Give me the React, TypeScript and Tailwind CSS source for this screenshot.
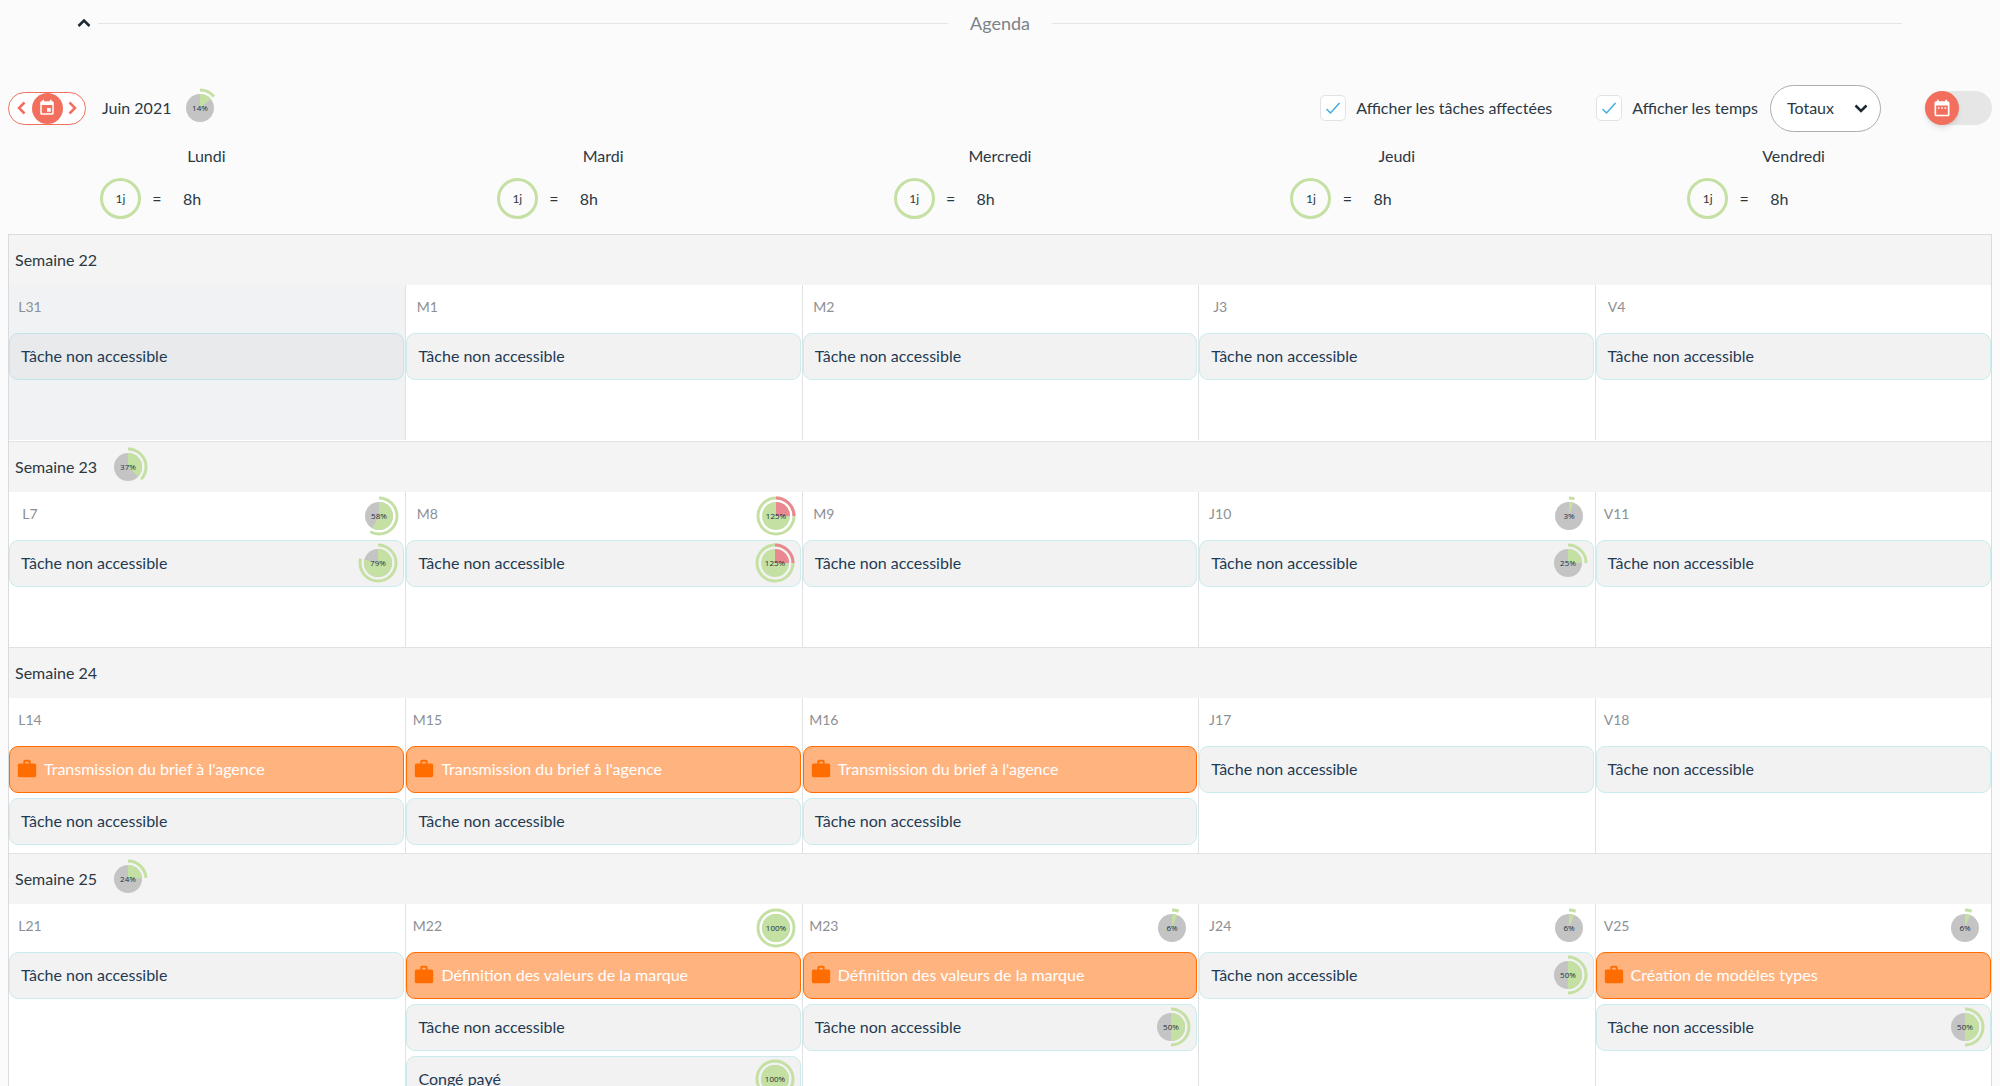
import { MdDateRange, MdEvent, MdWork } from "react-icons/md";

type Task = {
  label: string;
  project?: boolean;
  load?: number;
};

type Day = {
  code: string;
  load?: number;
  outside?: boolean;
  tasks: Task[];
};

type Week = {
  label: string;
  load?: number;
  days: Day[];
};

const WEEKDAYS = ["Lundi", "Mardi", "Mercredi", "Jeudi", "Vendredi"];

const CHEVRONS = {
  up: "M6.5 15 12 9.5 17.5 15",
  down: "M6.5 9.5 12 15 17.5 9.5",
  left: "M14.5 6.5 9 12 14.5 17.5",
  right: "M9.5 6.5 15 12 9.5 17.5",
};

const locked = (load?: number): Task => ({ label: "Tâche non accessible", load });
const project = (label: string): Task => ({ label, project: true });

const WEEKS: Week[] = [
  {
    label: "Semaine 22",
    days: [
      { code: "L31", outside: true, tasks: [locked()] },
      { code: "M1", tasks: [locked()] },
      { code: "M2", tasks: [locked()] },
      { code: "J3", tasks: [locked()] },
      { code: "V4", tasks: [locked()] },
    ],
  },
  {
    label: "Semaine 23",
    load: 37,
    days: [
      { code: "L7", load: 58, tasks: [locked(79)] },
      { code: "M8", load: 125, tasks: [locked(125)] },
      { code: "M9", tasks: [locked()] },
      { code: "J10", load: 3, tasks: [locked(25)] },
      { code: "V11", tasks: [locked()] },
    ],
  },
  {
    label: "Semaine 24",
    days: [
      { code: "L14", tasks: [project("Transmission du brief à l'agence"), locked()] },
      { code: "M15", tasks: [project("Transmission du brief à l'agence"), locked()] },
      { code: "M16", tasks: [project("Transmission du brief à l'agence"), locked()] },
      { code: "J17", tasks: [locked()] },
      { code: "V18", tasks: [locked()] },
    ],
  },
  {
    label: "Semaine 25",
    load: 24,
    days: [
      { code: "L21", tasks: [locked()] },
      { code: "M22", load: 100, tasks: [project("Définition des valeurs de la marque"), locked(), { label: "Congé payé", load: 100 }] },
      { code: "M23", load: 6, tasks: [project("Définition des valeurs de la marque"), locked(50)] },
      { code: "J24", load: 6, tasks: [locked(50)] },
      { code: "V25", load: 6, tasks: [project("Création de modèles types"), locked(50)] },
    ],
  },
];

export default function App() {
  return (
    <main className="h-screen overflow-hidden bg-[#fbfbfb] px-2 font-[Lato,'Open_Sans',sans-serif] text-base text-[#2b3844]">
      <AgendaHeading />
      <Toolbar />
      <WeekdayHeader />
      <div className="border border-[#d9dcdf] bg-white">
        {WEEKS.map((week) => (
          <WeekRow key={week.label} week={week} />
        ))}
      </div>
    </main>
  );
}

function Chevron({ direction, className = "" }: { direction: keyof typeof CHEVRONS; className?: string }) {
  return (
    <svg viewBox="0 0 24 24" aria-hidden="true" className={`size-6 fill-none stroke-current stroke-[2.5] ${className}`}>
      <path d={CHEVRONS[direction]} />
    </svg>
  );
}

function AgendaHeading() {
  return (
    <header className="flex h-[46px] items-center pr-[90px] pl-16">
      <button type="button" aria-label="Replier l'agenda" className="mr-0.5 text-[#1c2833]">
        <Chevron direction="up" />
      </button>
      <span className="h-px flex-1 bg-[#e3e5e6]" />
      <h1 className="px-[22px] text-lg text-[#7b8288]">Agenda</h1>
      <span className="h-px flex-1 bg-[#e3e5e6]" />
    </header>
  );
}

function Toolbar() {
  return (
    <div className="mt-[38px] flex h-12 items-center">
      <div className="flex h-[33px] w-[78px] items-center justify-between rounded-full border border-[#f26f5e] bg-white px-px text-[#f26f5e]">
        <button type="button" aria-label="Mois précédent">
          <Chevron direction="left" />
        </button>
        <button type="button" aria-label="Aujourd'hui" className="-mx-1 flex size-[31px] shrink-0 items-center justify-center rounded-full bg-[#f26f5e] text-white">
          <MdEvent className="size-[18px]" />
        </button>
        <button type="button" aria-label="Mois suivant">
          <Chevron direction="right" />
        </button>
      </div>
      <span className="ml-4 w-[78px]">Juin 2021</span>
      <LoadBadge value={14} />
      <div className="ml-auto flex items-center">
        <Checkbox label="Afficher les tâches affectées" />
        <span className="w-11" />
        <Checkbox label="Afficher les temps" />
        <TotalsSelect />
        <ViewSwitch />
      </div>
    </div>
  );
}

function Checkbox({ label }: { label: string }) {
  return (
    <label className="flex items-center gap-[10px]">
      <span className="grid size-[26px] place-items-center">
        <input type="checkbox" defaultChecked className="peer col-start-1 row-start-1 size-[26px] appearance-none rounded-[5px] border border-[#e0e3e5] bg-white" />
        <svg viewBox="0 0 16 16" className="pointer-events-none invisible col-start-1 row-start-1 size-4 fill-none stroke-[#41ade0] stroke-[1.5] peer-checked:visible">
          <path d="M1.5 9 5.5 13 14.5 3" />
        </svg>
      </span>
      {label}
    </label>
  );
}

function TotalsSelect() {
  return (
    <div className="ml-3 grid h-[47px] w-[111px] items-center">
      <select aria-label="Affichage des temps" className="col-start-1 row-start-1 h-full w-full appearance-none rounded-full border border-[#a9aeb3] bg-white pl-4">
        <option>Totaux</option>
      </select>
      <Chevron direction="down" className="pointer-events-none col-start-1 row-start-1 mr-2 justify-self-end text-[#1c2833]" />
    </div>
  );
}

function ViewSwitch() {
  return (
    <button type="button" role="switch" aria-checked="false" aria-label="Vue mensuelle" className="ml-11 flex h-[34px] w-[67px] items-center rounded-full bg-[#e6e6e6]">
      <span className="flex size-[34px] items-center justify-center rounded-full bg-[#f26f5e] text-white shadow-md">
        <MdDateRange className="size-5" />
      </span>
    </button>
  );
}

function WeekdayHeader() {
  return (
    <div className="grid h-[102px] grid-cols-5">
      {WEEKDAYS.map((name) => (
        <div key={name} className="flex flex-col pt-3">
          <span className="text-center">{name}</span>
          <div className="mt-[10px] flex items-center pl-[92px]">
            <span className="flex size-[41px] items-center justify-center rounded-full border-3 border-[#c4e0a3] text-xs">1j</span>
            <span className="w-8 text-center">=</span>
            <span className="ml-[10px]">8h</span>
          </div>
        </div>
      ))}
    </div>
  );
}

function WeekRow({ week }: { week: Week }) {
  return (
    <section className="border-t border-[#e0e2e4] first:border-t-0 first:pb-px">
      <div className="flex h-[50px] items-center bg-[#f4f4f4] pl-[6px]">
        <h2 className="w-[93px]">{week.label}</h2>
        {week.load !== undefined ? <LoadBadge value={week.load} /> : null}
      </div>
      <div className="grid grid-cols-5">
        {week.days.map((day) => (
          <DayCell key={day.code} day={day} />
        ))}
      </div>
    </section>
  );
}

function DayCell({ day }: { day: Day }) {
  return (
    <div className={["group min-h-[155px] border-l border-[#e0e2e4] first:border-l-0", day.outside ? "bg-[#f0f2f4]" : "bg-white"].join(" ")}>
      <div className="flex h-12 items-start justify-between pr-[6px]">
        <span className="w-[42px] pt-3 text-center text-sm text-[#8c9094]">{day.code}</span>
        {day.load !== undefined ? (
          <span className="pt-1">
            <LoadBadge value={day.load} />
          </span>
        ) : null}
      </div>
      <div className="flex flex-col gap-[5px] pr-px group-last:pr-0">
        {day.tasks.map((task, index) => (
          <TaskCard key={index} task={task} dimmed={day.outside} />
        ))}
      </div>
    </div>
  );
}

function TaskCard({ task, dimmed }: { task: Task; dimmed?: boolean }) {
  if (task.project) {
    return (
      <div className="flex h-[47px] items-center gap-[6px] rounded-[9px] border border-[#ff6d00] bg-[#ffb47f] pb-px pl-[6px] text-white">
        <MdWork className="size-[22px] text-[#ff6d00]" />
        {task.label}
      </div>
    );
  }

  return (
    <div className={[
      "flex h-[47px] items-center justify-between rounded-[9px] border pr-[5px] pb-px pl-[11px] text-[#1f3a52]",
      dimmed ? "border-[#c2e4ea] bg-[#e8eaeb]" : "border-[#caecec] bg-[#f2f2f2]",
    ].join(" ")}>
      {task.label}
      {task.load !== undefined ? <LoadBadge value={task.load} /> : null}
    </div>
  );
}

// Pie and outer ring share the same ratio; anything above 100% is drawn in red on top.
function LoadBadge({ value }: { value: number }) {
  const over = value > 100;
  const share = over ? value - 100 : Math.max(value, 5);
  const color = over ? "#eb8791" : "#c4e0a3";
  const base = over ? "#c4e0a3" : "#c4c4c4";

  return (
    <svg viewBox="0 0 40 40" className="size-10 shrink-0" role="img" aria-label={`${value}%`}>
      <circle cx="20" cy="20" r="14" fill={base} />
      {over ? <circle cx="20" cy="20" r="18" fill="none" stroke={base} strokeWidth="3" /> : null}
      <g transform="rotate(-90 20 20)" fill="none" stroke={color}>
        <circle cx="20" cy="20" r="7" strokeWidth="14" pathLength="100" strokeDasharray={`${share} 100`} />
        <circle cx="20" cy="20" r="18" strokeWidth="3" pathLength="100" strokeDasharray={`${share} 100`} />
      </g>
      <text x="20" y="23" textAnchor="middle" fill="#22303c" className="font-['Open_Sans',sans-serif] text-[8px]">
        {value}%
      </text>
    </svg>
  );
}
